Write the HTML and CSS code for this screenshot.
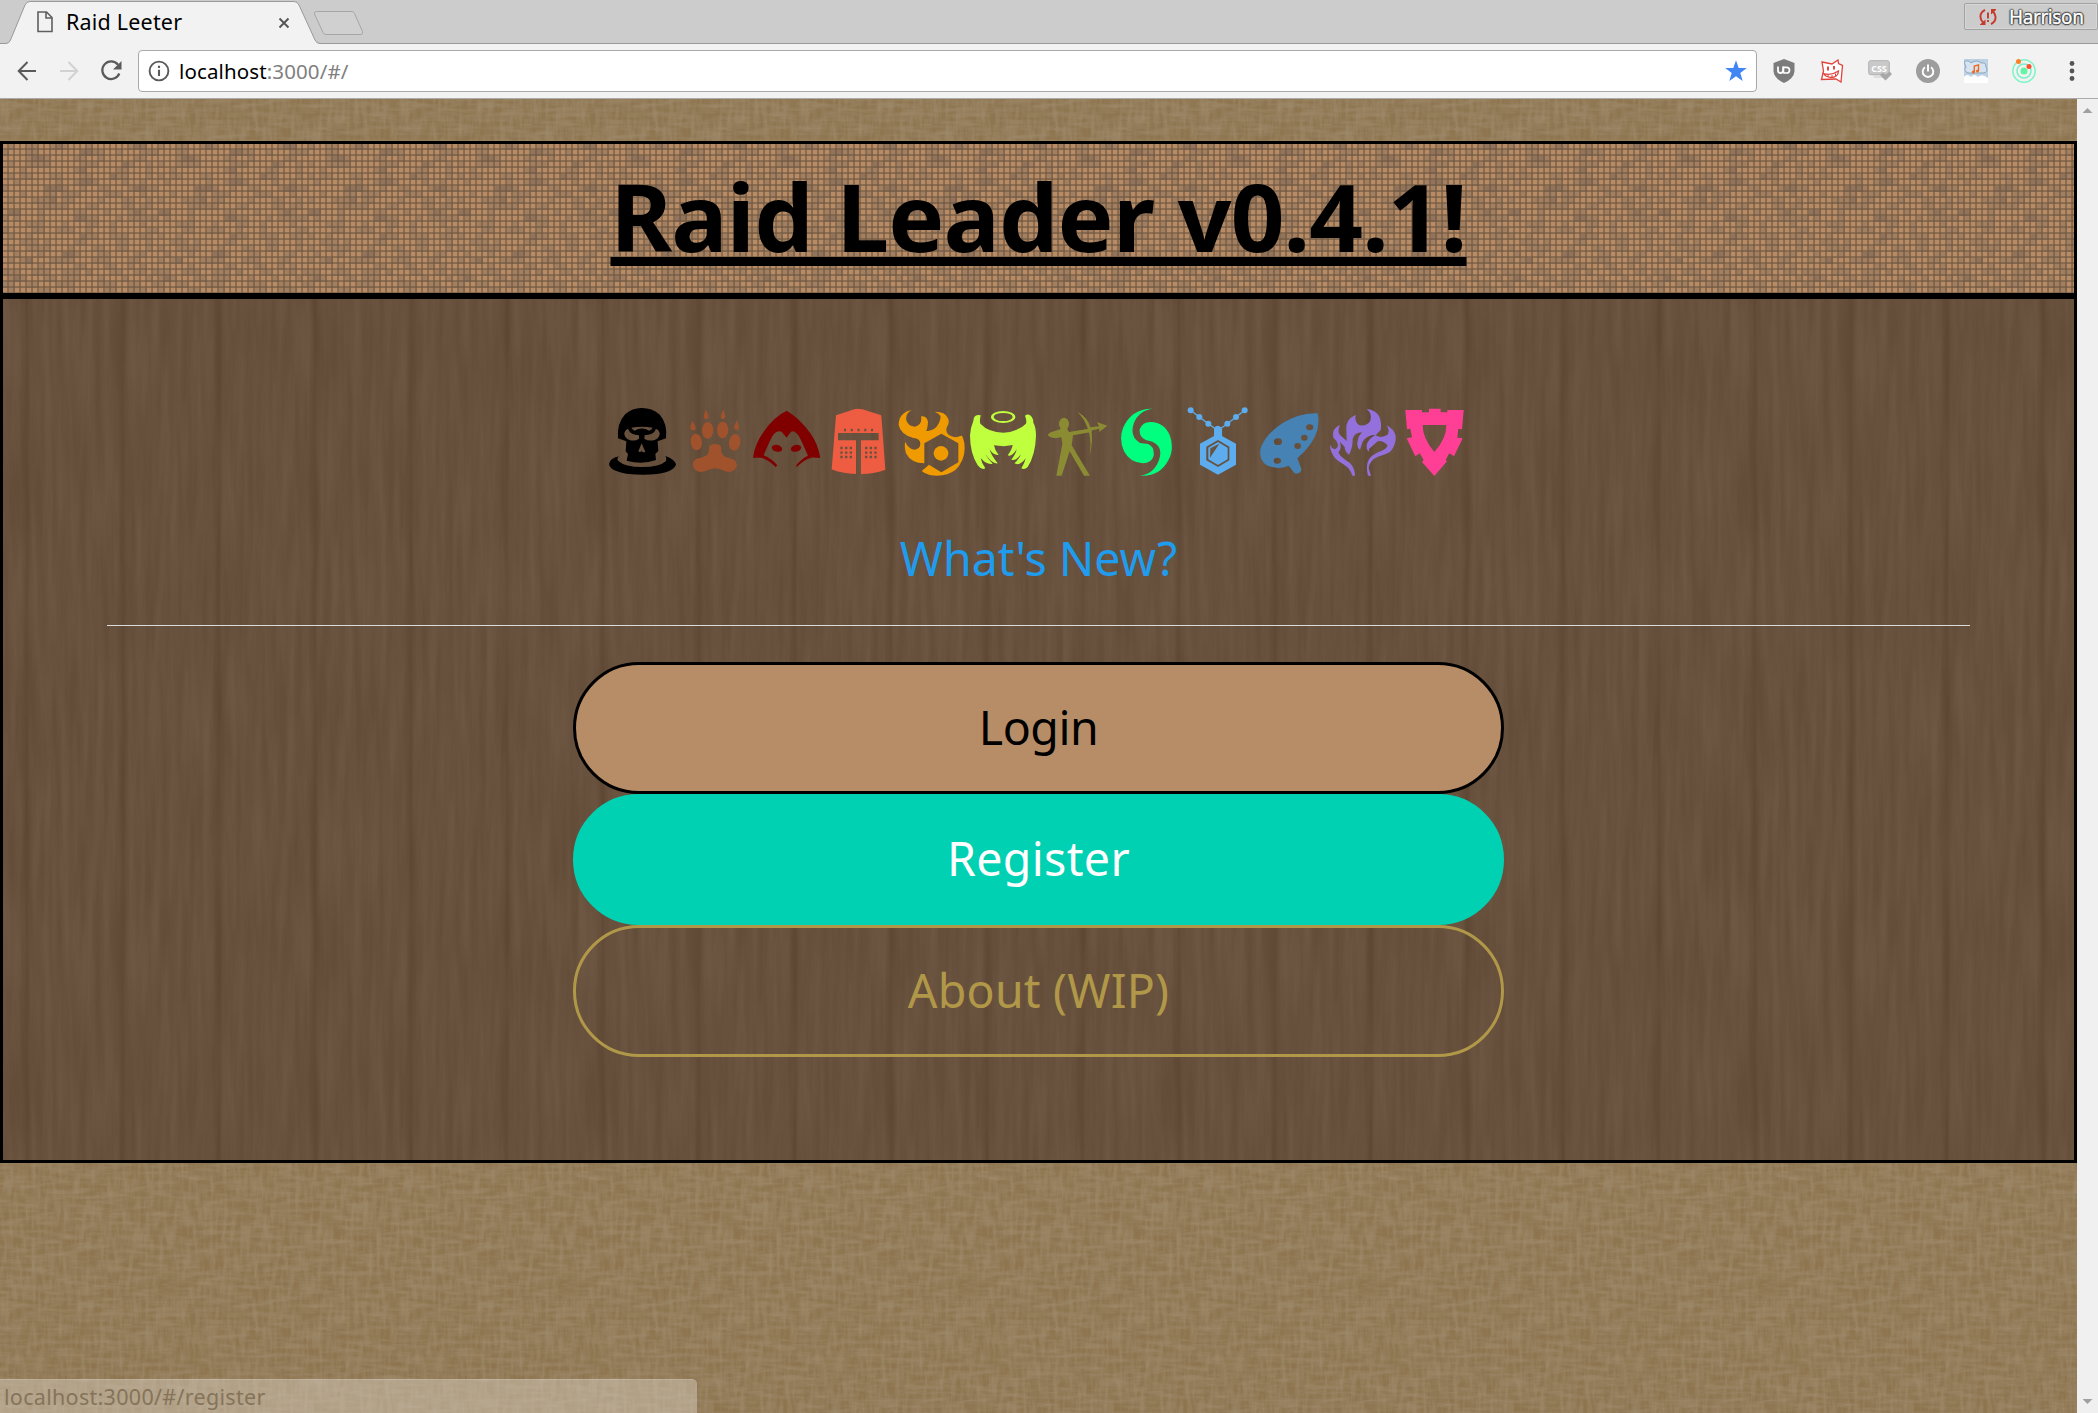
FILE: index.html
```html
<!DOCTYPE html>
<html lang="en">
<head>
<meta charset="utf-8">
<title>Raid Leeter</title>
<link rel="stylesheet" href="styles.css">
</head>
<body>
<div class="browser">
  <div class="tabstrip">
    <div class="tab">
      <svg class="tab-shape" viewBox="0 0 320 44"><path d="M0 43.5H6Q9 43.5 10.500 40L25 5Q26.500 1.500 30 1.500H294Q297.500 1.500 299 5L315 40Q316.500 43.500 320 43.500V45H0Z" fill="#f2f2f2"/><path d="M0 43.500H6Q9 43.500 10.500 40L25 5Q26.500 1.500 30 1.500H294Q297.500 1.500 299 5L315 40Q316.500 43.500 320 43.500" fill="none" stroke="#999"/></svg>
      <svg class="tab-page" viewBox="0 0 18 24"><path d="M2 2H10.500L16 7.500V21.500H2ZM10 2V8H16" fill="none" stroke="#5f5f5f" stroke-width="1.600"/></svg>
      <span class="tab-title">Raid Leeter</span>
      <svg class="tab-close" viewBox="0 0 12 12"><path d="M1.500 1.500L10.500 10.500M10.500 1.500L1.500 10.500" stroke="#555" stroke-width="1.900"/></svg>
    </div>
    <svg class="newtab" viewBox="0 0 52 26"><path d="M3.500 1.500H39Q40.500 1.500 41.500 3.500L49.500 21.500Q50 24.500 48 24.500H13Q11 24.500 10 22.500L1.500 4Q.8 1.500 3.500 1.500Z" fill="#d0d0d0" stroke="#a6a6a6"/></svg>
    <div class="profile">
      <svg class="sync" viewBox="0 0 18 18"><g fill="none" stroke="#c7392c" stroke-width="1.900"><path d="M6 1.800Q1 4.500 1.500 9Q1.700 12.500 4.500 14.500M12 16.200Q17 13.500 16.500 8.500Q16 5.500 14 3.500M9 4.500V10.500M9 12V14"/></g><path d="M1 17V16.500L6.500 11.500V17ZM12 1H17V2L12 6.500Z" fill="#c7392c"/></svg>
      <span class="profile-name">Harrison</span>
    </div>
  </div>
  <div class="toolbar">
    <svg class="nav" viewBox="0 0 24 24"><path d="M21 12H4M12.500 3L3.700 12L12.500 21" fill="none" stroke="#5a5a5a" stroke-width="2"/></svg>
    <svg class="nav" viewBox="0 0 24 24"><path d="M3 12H20M11.500 3L20.300 12L11.500 21" fill="none" stroke="#d2d2d2" stroke-width="2"/></svg>
    <svg class="nav" viewBox="0 0 24 24"><path d="M19 5.700A8.800 8.800 0 1 0 20.300 14.500" fill="none" stroke="#5a5a5a" stroke-width="2.200"/><path d="M22.500 2V10.500H14Z" fill="#5a5a5a"/></svg>
    <div class="omnibox">
      <svg class="info" viewBox="0 0 22 22"><circle cx="11" cy="11" r="9.400" fill="none" stroke="#5a5a5a" stroke-width="1.900"/><path d="M11 9.700V16M11 5.800V8" stroke="#5a5a5a" stroke-width="2.100"/></svg>
      <span class="url">localhost<span class="url-rest">:3000/#/</span></span>
      <svg class="star" viewBox="0 0 22 22"><path d="M11 .3L13.700 8H21.800L15.300 12.900L17.700 21L11 16.200L4.300 21L6.700 12.900L.2 8H8.300Z" fill="#4285f4"/></svg>
    </div>
    <div class="extensions">
      <svg viewBox="0 0 24 24"><path d="M12 0L22.500 4V12Q22 19.500 12 24Q2 19.500 1.500 12V4Z" fill="#7c7c7c"/><path d="M6 7.500V11.500Q6 14 8.300 14Q11.300 14 11.300 11V7.500" fill="none" stroke="#fff" stroke-width="1.800"/><path d="M11.300 8.400H14.500Q17.500 8.400 17.500 11.200Q17.500 14 14.500 14H12.800Q11.300 14 11.300 12Z" fill="none" stroke="#fff" stroke-width="1.700"/></svg>
      <svg viewBox="0 0 24 24"><g fill="#fff" stroke="#e0433b" stroke-width="1.300"><path d="M2 3L12 5L18 1L18.500 4.500L22.500 6.500L21 23L16 20L1.500 20.500L3.500 12Z"/><path d="M3.500 14.500Q11 17 18.500 12Q18 18.500 11 18.500Q5.500 18 3.500 14.500Z" stroke-width="1.300"/><path d="M8 7.500V11.500M14 7V10.500" stroke-width="1.900"/></g><path d="M8 16V18M12 16V18.500M15.500 14.500V17" stroke="#e0433b"/></svg>
      <svg viewBox="0 0 24 24"><rect x=".7" y="1.700" width="20.600" height="14" rx="2" fill="#c9c9c9" stroke="#b0b0b0"/><text class="css-label" x="11" y="12.500" text-anchor="middle">CSS</text><path d="M5 16H13L15 19H6Z" fill="#ddd"/><path d="M12 16L15 13.500L17.500 16L21.500 12.500L24 15L17.500 21.500Z" fill="#a8a8a8"/></svg>
      <svg viewBox="0 0 24 24"><circle cx="12" cy="12" r="12" fill="#9d9d9d"/><path d="M9 8.300A5.300 5.300 0 1 0 15 8.300M12 5.500V12.500" fill="none" stroke="#fff" stroke-width="1.900"/></svg>
      <svg viewBox="0 0 24 24"><rect width="24" height="24" fill="#bcd2e4"/><path d="M0 3Q4 0 7 4Q13 0 17 4Q22 3 22 8Q25 13 19 14H4Q-1 12 2 8Z" fill="#d7e4ef" stroke="#8aa7c1"/><path d="M0 24V18Q3 14 7 18Q10 14 14 18Q18 14 24 19V24Z" fill="#fff"/><path d="M10.300 13V7L14.500 6V12" fill="none" stroke="#ed6b21" stroke-width="1.400"/><circle cx="9.300" cy="13" r="1.500" fill="#ed6b21"/><circle cx="13.500" cy="12" r="1.500" fill="#ed6b21"/></svg>
      <svg viewBox="0 0 24 24"><circle cx="12" cy="12" r="3.500" fill="#63f5a5"/><circle cx="12" cy="12" r="7" fill="none" stroke="#75f0c8" stroke-width="1.500"/><circle cx="12" cy="12" r="11.200" fill="none" stroke="#80f5c6" stroke-width="1.500"/><circle cx="6.500" cy="2.500" r="2.500" fill="#ff7f27"/><circle cx="17" cy="7.500" r="2.500" fill="#fa4f2d"/></svg>
      <svg viewBox="0 0 24 24"><g fill="#555"><circle cx="12" cy="4.500" r="2.400"/><circle cx="12" cy="12" r="2.400"/><circle cx="12" cy="19.500" r="2.400"/></g></svg>
    </div>
  </div>
  <div class="viewport">
    <main class="page">
      <header class="banner"><h1 class="title">Raid Leader v0.4.1!</h1></header>
      <section class="panel">
        <div class="classes">
          <svg viewBox="18 30 216 216"><path fill-rule="evenodd" d="M54 130Q50 85 76 57Q98 38 126 39Q156 39 178 58Q203 85 198 130L173 139L175 168L166 177L168 195Q126 210 80 197L84 177L77 169L79 139ZM84 101Q76 104 73 114Q72 128 88 135Q106 140 117 131L117 121Q94 119 88 109ZM168 101Q176 104 179 114Q180 128 164 135Q146 140 133 131L134 121Q158 119 164 109ZM94 98Q126 92 158 98Q154 105 147 107L137 102Q126 99 114 102L104 107Q98 104 94 98ZM125 145L136 170Q130 175 125 168Q120 174 115 169Z"/><path d="M57 184Q50 190 54 197Q75 216 126 216Q180 216 198 198Q202 190 196 183Q222 191 228 208Q224 230 171 237Q126 242 80 236Q30 228 27 207Q29 191 57 184Z"/></svg>
          <svg viewBox="234 30 216 216" fill="#a0522d"><ellipse cx="323" cy="106" rx="17" ry="25"/><ellipse cx="368" cy="105" rx="17" ry="25"/><ellipse cx="289" cy="141" rx="17" ry="25" transform="rotate(-8 289 141)"/><ellipse cx="404" cy="142" rx="17" ry="25" transform="rotate(8 404 142)"/><path d="M317 44Q326 58 326 67Q325 73 318 73Q311 71 311 64ZM370 43Q376 60 376 66Q374 73 367 73Q361 70 362 64ZM277 78Q287 92 287 101Q285 106 278 106Q270 104 271 97ZM410 76Q417 93 417 100Q415 106 408 105Q401 102 402 96ZM327 159Q328 147 345 147Q363 147 364 158Q362 170 368 179Q377 188 396 191Q410 196 411 211Q407 227 391 231Q377 231 365 224Q344 215 327 224Q313 231 299 231Q281 226 279 211Q278 194 294 190Q314 187 323 178Q329 170 327 159Z"/></svg>
          <svg viewBox="450 30 216 216" fill="#800000"><path d="M560 47Q598 69 630 113Q654 145 661 189Q641 187 633 188Q609 195 590 217L589 210Q606 190 624 182Q606 140 596 122Q583 104 573 110L560 128L545 110Q524 104 510 137Q497 165 491 181Q514 190 532 211L527 216Q508 196 484 188L459 188Q464 147 491 110Q522 65 560 47Z"/><ellipse cx="531" cy="160" rx="16" ry="10" transform="rotate(14 531 160)"/><ellipse cx="588" cy="160" rx="16" ry="10" transform="rotate(-14 588 160)"/></svg>
          <svg viewBox="666 30 216 216" fill="#ee5c42"><path fill-rule="evenodd" d="M708 61L765 42Q776 40 787 43L844 61L856 224Q828 236 783 237V136H836V114H714V136H768V237Q725 236 695 223Z"/><path d="M732 105H822" stroke="#67513f" stroke-width="7" stroke-dasharray="6 14.300"/><path d="M721 159H757M721 173H757M721 186H757M795 159H831M795 173H831M795 186H831" stroke="#67513f" stroke-width="7" stroke-dasharray="7 7"/></svg>
          <svg viewBox="12 30 216 216" fill="#ee9a00"><path d="M66 45Q48 53 48 73Q53 94 75 95Q98 88 93 64Q111 63 114 80Q113 101 108 108Q127 108 139 96Q154 75 151 62Q146 54 134 50Q165 49 173 68Q180 80 172 94Q165 105 174 118Q188 130 205 125Q208 122 216 122Q224 137 224 161Q223 199 196 225Q166 248 119 240Q102 235 95 228L117 209L154 232L205 202V145L154 116L103 145V205Q63 205 48 175Q42 155 46 141Q55 162 73 164Q91 161 91 146Q91 131 70 129Q31 118 26 90Q26 52 66 45Z"/><circle cx="153" cy="175" r="22"/></svg>
          <svg viewBox="228 30 216 216" fill="#c0ff3e"><path fill-rule="evenodd" d="M303 66A36 18 0 1 0 376 66A36 18 0 1 0 303 66ZM311 66A28 12 0 1 1 368 66A28 12 0 1 1 311 66Z"/><path d="M272 61Q268 78 271 86Q296 112 340 113Q382 111 408 86Q411 77 405 62Q413 55 422 62Q430 69 430 83Q438 96 438 123Q436 181 413 216Q404 225 394 220Q404 205 407 190Q390 214 373 205Q389 190 393 178Q376 200 364 194Q378 176 380 163Q366 186 353 181Q366 164 368 150L341 154L312 151Q314 165 326 180Q310 182 299 163Q302 179 323 205Q305 207 287 178Q292 190 308 206Q290 210 272 189Q275 205 286 220Q275 226 263 211Q240 174 240 121Q242 96 250 78Q251 55 272 61Z"/></svg>
          <svg viewBox="444 30 216 216" fill="#8b8b33"><ellipse cx="522" cy="87" rx="15" ry="19"/><path d="M515 101H531L537 111L606 100L605 111L549 121L545 151L600 242H582L539 169L515 242H499L517 147L514 127L496 130Q480 128 473 120Q478 111 494 108Z"/><path d="M562 50Q625 83 598 185Q613 102 562 50ZM600 97L627 94L621 81L652 92L628 111V101L601 107Z"/></svg>
          <svg viewBox="660 30 216 216" fill="#00ff7f"><path d="M790 41Q746 45 731 86Q718 124 750 144L774 147Q794 155 791 182Q785 204 758 205Q720 203 702 169Q686 133 699 99Q725 39 790 41ZM748 242Q791 239 807 195Q821 154 787 140L767 135Q747 126 749 103Q758 80 783 81Q822 82 839 120Q854 161 835 196Q808 247 748 242Z"/></svg>
          <svg viewBox="6 30 216 216" fill="#5cacee"><path d="M32 46L58 66L85 86L108 103M194 46L168 66L142 86L119 103" stroke="#5cacee" stroke-width="4"/><circle cx="32" cy="46" r="9"/><circle cx="58" cy="66" r="9"/><circle cx="85" cy="86" r="9"/><circle cx="142" cy="86" r="9"/><circle cx="168" cy="66" r="9"/><circle cx="194" cy="46" r="9"/><path fill-rule="evenodd" d="M102 123V101Q105 92 114 92Q123 93 126 102V123L168 146V209L114 239L60 209V146ZM114 135L79 155V196L114 216L148 196V155Z"/><path fill-rule="evenodd" d="M114 141L143 158V193L114 210L85 193V158ZM118 146L91 160L90 188Z"/></svg>
          <svg viewBox="222 30 216 216" fill="#4682b4"><path fill-rule="evenodd" d="M413 55Q418 79 412 106Q400 149 352 190L364 222Q364 234 350 236Q342 236 338 227L326 212Q294 226 260 211Q235 193 242 160Q256 118 307 85Q360 52 413 55ZM282 140A12 10 0 1 0 306 140A12 10 0 1 0 282 140ZM281 197A11 9 0 1 0 303 197A11 9 0 1 0 281 197ZM343 153A10 9 0 1 0 363 153A10 9 0 1 0 343 153ZM363 128A10 9 0 1 0 383 128A10 9 0 1 0 363 128ZM378 97A11 9 0 1 0 400 97A11 9 0 1 0 378 97Z"/></svg>
          <svg viewBox="438 30 216 216" fill="#9370db"><path d="M451 148Q453 160 464 163Q475 157 474 149Q471 136 460 128Q453 101 480 90Q471 110 480 120L500 138L499 103Q496 74 527 59Q522 81 539 91Q561 94 571 77Q578 57 560 42Q588 45 598 65Q606 85 602 105L587 121Q605 133 624 118Q629 104 620 91Q642 102 647 123Q649 148 632 169Q620 178 597 184Q568 196 566 220L573 242H564Q558 218 563 202Q570 180 602 169Q623 160 622 150Q606 134 593 139L567 162L566 171Q550 152 572 130L587 119Q560 120 548 140L540 164Q526 157 536 125L546 112Q523 113 518 132Q519 157 507 179Q494 170 494 156L479 140Q487 160 475 172Q480 186 509 203Q524 216 525 242H517Q513 222 489 207Q467 194 460 182Q448 163 451 148Z"/></svg>
          <svg viewBox="654 30 216 216" fill="#ff3e96"><path fill-rule="evenodd" d="M676 45H726V52H747V41H782V52H802V45H851L846 103L835 101L832 128L848 130L822 184L808 175L797 195L801 199L763 243L726 201L731 195L719 175L706 184L680 130L696 127L691 101L681 103ZM728 90Q728 130 763 171Q800 130 799 90Z"/></svg>
        </div>
        <a class="whats-new">What's New?</a>
        <hr class="rule">
        <nav class="menu">
          <a class="button login">Login</a>
          <a class="button register">Register</a>
          <a class="button about">About (WIP)</a>
        </nav>
      </section>
      <div class="status"><span>localhost:3000/#/register</span></div>
    </main>
    <div class="scrollbar"><i class="arrow up"></i><i class="arrow down"></i></div>
  </div>
</div>
</body>
</html>
```
FILE: styles.css
```css
* { box-sizing: border-box; }
body { margin: 0; font-family: "Noto Sans", "Open Sans", sans-serif; color: #000; }
svg { display: block; flex: none; }
.browser { display: flex; flex-direction: column; height: 1413px; overflow: hidden; }

/* Tab strip */
.tabstrip { display: flex; height: 44px; background: #ccc; border-bottom: 1px solid #999; }
.tab { position: relative; width: 320px; height: 44px; display: flex; align-items: center; padding-left: 36px; }
.tab-shape { position: absolute; left: 0; top: 0; width: 320px; height: 44px; }
.tab-page { position: relative; width: 18px; height: 24px; }
.tab-title { position: relative; margin-left: 12px; width: 212px; font-size: 21.500px; line-height: 44px; letter-spacing: .2px; }
.tab-close { position: relative; width: 12px; height: 12px; top: 1px; }
.newtab { width: 52px; height: 26px; margin: 10px 0 0 -7px; position: relative; }
.profile { display: flex; align-items: center; gap: 12px; margin: 3px 0 0 auto; width: 134px; height: 27px; padding-left: 14px; border: 1px solid #a2a2a2; border-radius: 2px; box-shadow: inset 0 0 0 1px #d6d6d6; }
.sync { width: 18px; height: 18px; }
.profile-name { font-size: 19px; line-height: 24px; letter-spacing: -.4px; color: #fff; -webkit-text-stroke: .4px #fff; text-shadow: 0 0 2px #222, 0 0 2px #222, 1px 0 1px #444, -1px 0 1px #444, 0 1px 1px #444, 0 -1px 1px #444; }

/* Toolbar */
.toolbar { display: flex; align-items: center; height: 55px; padding: 0 14px 0 15px; gap: 18px; background: #f2f2f2; border-bottom: 1px solid #aaa; }
.nav { width: 24px; height: 24px; }
.omnibox { display: flex; align-items: center; flex: 1; height: 42px; margin: 0 -3px; padding: 0 9px; background: #fff; border: 1px solid #a8a8a8; border-radius: 4px; }
.info { width: 22px; height: 22px; }
.url { margin-left: 9px; flex: 1; padding-top: 1px; font-size: 20.500px; line-height: 39px; letter-spacing: .12px; }
.url-rest { color: #808080; }
.star { width: 22px; height: 22px; }
.extensions { display: flex; gap: 24px; }
.extensions svg { width: 24px; height: 24px; }
.css-label { font: bold 9px "Open Sans", sans-serif; fill: #fff; }

/* Page */
.viewport { display: flex; flex: 1; min-height: 0; }
.page {
  position: relative; flex: 1; padding-top: 42px; background-color: #8e7550;
  background-image: url("data:image/svg+xml,%3Csvg xmlns='http://www.w3.org/2000/svg' width='400' height='400'%3E%3Cfilter id='a' x='0' y='0' width='1' height='1' color-interpolation-filters='sRGB'%3E%3CfeTurbulence type='fractalNoise' baseFrequency='.04 .22' numOctaves='3' seed='3' stitchTiles='stitch'/%3E%3CfeColorMatrix values='0 0 0 0 .62 0 0 0 0 .54 0 0 0 0 .42 1.600 0 0 0 -.6'/%3E%3C/filter%3E%3Cfilter id='b' x='0' y='0' width='1' height='1' color-interpolation-filters='sRGB'%3E%3CfeTurbulence type='fractalNoise' baseFrequency='.22 .04' numOctaves='3' seed='8' stitchTiles='stitch'/%3E%3CfeColorMatrix values='0 0 0 0 .62 0 0 0 0 .54 0 0 0 0 .42 1.600 0 0 0 -.6'/%3E%3C/filter%3E%3Crect width='400' height='400' filter='url(%23a)'/%3E%3Crect width='400' height='400' filter='url(%23b)'/%3E%3C/svg%3E");
}
.banner {
  display: flex; justify-content: center; height: 155px; border: 3px solid #000; background-color: #b68b65;
  background-image:
    linear-gradient(90deg, transparent 66%, rgba(112,88,66,.65) 76%),
    linear-gradient(transparent 66%, rgba(112,88,66,.65) 76%),
    url("data:image/svg+xml,%3Csvg xmlns='http://www.w3.org/2000/svg' width='150' height='150' viewBox='0 0 25 25'%3E%3Cg stroke='%23806a57' fill='none'%3E%3Cpath opacity='.36' d='M1 .5h1m2 0h2m2 0h3m3 0h1m6 0h3M0 1.500h1m3 0h2m7 0h4m2 0h1m3 0h2M4 2.500h4m4 0h2m2 0h1m5 0h2M1 3.500h1m2 0h4m5 0h3m4 0h2m2 0h1M3 4.500h1m8 0h2m5 0h2m3 0h1M1 5.500h1m1 0h2m3 0h2m3 0h2m3 0h3m3 0h2M2 6.500h1m6 0h1m2 0h4m4 0h1m2 0h1M0 7.500h1m6 0h4m2 0h1m2 0h2m3 0h4M3 8.500h1m3 0h2m1 0h3m4 0h3m3 0h1M1 9.500h1m3 0h4m1 0h2m4 0h1m3 0h2m2 0h1M6 10.500h5m3 0h2m4 0h2m1 0h2M1 11.500h2m3 0h1m5 0h2m3 0h1m3 0h3M0 12.500h1m1 0h1m3 0h1m5 0h4m3 0h1m1 0h4M4 13.500h3m3 0h1m3 0h2m2 0h1m4 0h1M0 14.500h1m4 0h2m2 0h3m2 0h1m3 0h1m5 0h2M1 15.500h1m2 0h1m8 0h3m2 0h3m2 0h2M3 16.500h3m1 0h1m4 0h2m5 0h2m3 0h1M1 17.500h1m2 0h4m3 0h1m3 0h2m2 0h2m3 0h1M2 18.500h1m3 0h1m3 0h3m3 0h2m4 0h2M1 19.500h1m1 0h2m3 0h4m3 0h3m3 0h2M6 20.500h1m5 0h2m3 0h2m2 0h1m1 0h1M0 21.500h3m2 0h3m2 0h3m5 0h2m2 0h2M1 22.500h3m3 0h2m1 0h3m3 0h1m3 0h1m3 0h1M0 23.500h2m2 0h2m3 0h3m4 0h3m2 0h2M1 24.500h1m4 0h2m3 0h1m5 0h2m2 0h3'/%3E%3Cpath opacity='.5' d='M9 .5h1m12 0h2M13 1.500h2M5 2.500h2M20 3.500h1M13 4.500h1M18 5.500h1M13 6.500h2M7 7.500h3m12 0h2M8 9.500h1M1 11.500h2m19 0h1M12 12.500h2M13 15.500h1M10 18.500h2M4 19.500h1M14 21.500h1M2 22.500h1'/%3E%3C/g%3E%3C/svg%3E");
  background-size: 6px 6px, 6px 6px, 150px 150px;
}
.title { margin: -13px 0 0; font-size: 94px; font-weight: 700; line-height: 170px; letter-spacing: -.8px; white-space: nowrap; text-decoration: underline; text-decoration-thickness: 9px; text-underline-offset: 5px; text-decoration-skip-ink: none; }
.panel {
  display: flex; flex-direction: column; align-items: center; height: 867px; padding: 106px 104px 0; border: 3px solid #000; background-color: #634d39;
  background-image:
    repeating-linear-gradient(90deg, transparent 0 17px, rgba(70,45,25,.13) 21px, rgba(70,45,25,.25) 24px, rgba(70,45,25,.08) 27px, transparent 31px 96px),
    url("data:image/svg+xml,%3Csvg xmlns='http://www.w3.org/2000/svg' width='576' height='600'%3E%3Cfilter id='a' x='0' y='0' width='1' height='1' color-interpolation-filters='sRGB'%3E%3CfeTurbulence type='fractalNoise' baseFrequency='.12 .008' numOctaves='4' seed='5' stitchTiles='stitch'/%3E%3CfeColorMatrix values='0 0 0 0 .47 0 0 0 0 .38 0 0 0 0 .30 .8 0 0 0 -.18'/%3E%3C/filter%3E%3Crect width='576' height='600' filter='url(%23a)'/%3E%3C/svg%3E");
}
.classes { display: flex; width: 864px; margin-right: 2px; }
.classes svg { width: 72px; height: 72px; }
.whats-new { margin-top: 49px; font-size: 46.500px; line-height: 64px; color: #209cee; white-space: nowrap; }
.rule { width: 1863px; height: 1px; margin: 35px 0 36px; border: 0; background: #dbdbdb; }
.menu { display: flex; flex-direction: column; width: 931px; }
.button { display: flex; align-items: center; justify-content: center; height: 131.600px; padding-bottom: 2px; border: 3px solid #000; border-radius: 66px; font-size: 46.500px; line-height: 64px; white-space: nowrap; }
.login { background: #b78d67; letter-spacing: -.5px; }
.register { background: #00d1b2; border-color: #00d1b2; color: #fff; letter-spacing: .35px; }
.about { border-color: #b19849; color: #b19849; letter-spacing: .2px; }
.status { position: absolute; left: 0; bottom: 0; width: 697px; height: 34px; padding-left: 4px; background: rgba(224,216,205,.42); border-top: 1px solid rgba(255,255,255,.15); border-top-right-radius: 5px; font-size: 21.500px; line-height: 33px; letter-spacing: .3px; color: #857459; }
.scrollbar { display: flex; flex-direction: column; justify-content: space-between; align-items: center; width: 21px; padding: 9px 0; background: #f0f0f0; }
.arrow { width: 10px; height: 5px; background: #a0a0a0; }
.up { clip-path: polygon(50% 0, 100% 100%, 0 100%); }
.down { clip-path: polygon(0 0, 100% 0, 50% 100%); }
```
